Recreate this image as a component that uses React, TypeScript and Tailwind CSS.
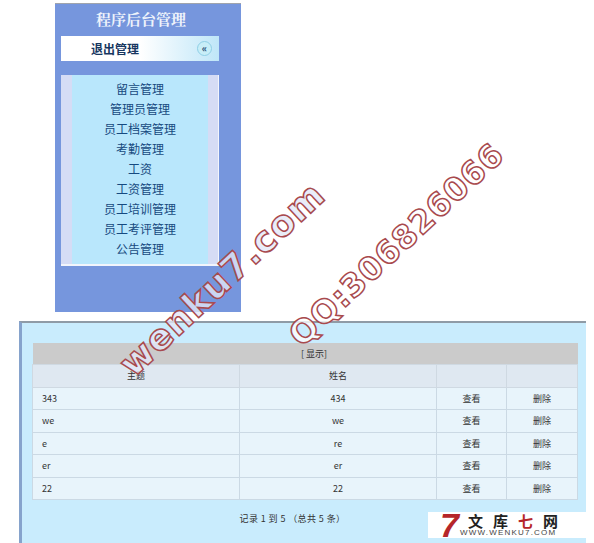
import React from "react";

const menu = ["留言管理","管理员管理","员工档案管理","考勤管理","工资","工资管理","员工培训管理","员工考评管理","公告管理"];
const rows = [["343","434"],["we","we"],["e","re"],["er","er"],["22","22"]];

export default function App() {
  return (
    <div className="relative w-[594px] h-[543px] overflow-hidden bg-white font-['Noto_Sans_CJK_SC',sans-serif]">
      <aside className="ml-[55px] mt-[3px] w-[186px] h-[309px] bg-[#7696dd] border-t-[1px] border-[#a0a4ac] flex flex-col px-[6px]">
        <h1 className="mt-[5px] pr-[14px] text-center text-[15px] leading-[20px] font-bold text-[#eef3fb] font-['Noto_Serif_CJK_SC','Noto_Sans_CJK_SC',serif]">程序后台管理</h1>
        <div className="mt-[7px] h-[25px] w-[158px] flex items-center justify-between bg-gradient-to-r from-white from-50% to-[#bfe6f8] pl-[30px] pr-[7px]">
          <span className="text-[12px] font-bold text-[#17365f]">退出管理</span>
          <span className="w-[15px] h-[15px] rounded-full bg-[#c8eef8] border border-[#8fcfe6] text-[#1c4a70] text-[10px] leading-[11px] text-center font-bold">«</span>
        </div>
        <nav className="mt-[14px] h-[191px] w-[158px] bg-[#d5dcf5] border-b-2 border-r border-[#f2f5fc] px-[11px]">
          <ul className="h-full w-[136px] bg-[#b9e7fc] pt-[4px]">
            {menu.map((m) => (
              <li key={m} className="h-[20px] leading-[20px] text-center text-[12px] text-[#174a80]">{m}</li>
            ))}
          </ul>
        </nav>
      </aside>

      <main className="ml-[19px] mt-[9px] w-[567px] h-[222px] bg-[#c9ecfd] border-t-2 border-l-[3px] border-t-[#8f9ba6] border-l-[#86a3cc] pl-[10px] pr-[9px] pt-[20px]">
        <table className="w-[545px] table-fixed border-collapse text-[9px] text-[#333]">
          <colgroup>
            <col className="w-[207px]" />
            <col className="w-[197px]" />
            <col className="w-[70px]" />
            <col className="w-[71px]" />
          </colgroup>
          <thead>
            <tr className="h-[21px] bg-[#cbcbcb]">
              <th colSpan={4} className="font-normal text-center text-[#333] pl-[18px]">[ 显示]</th>
            </tr>
            <tr className="h-[23px] bg-[#dfe8f1]">
              <th className="font-normal border border-[#cfd9e2]">主题</th>
              <th className="font-normal border border-[#cfd9e2]">姓名</th>
              <th className="border border-[#cfd9e2]"></th>
              <th className="border border-[#cfd9e2]"></th>
            </tr>
          </thead>
          <tbody>
            {rows.map((r, i) => (
              <tr key={i} className="h-[22.5px] bg-[#e8f4fb]">
                <td className="border border-[#cbd9e4] pl-[9px]">{r[0]}</td>
                <td className="border border-[#cbd9e4] text-center">{r[1]}</td>
                <td className="border border-[#cbd9e4] text-center">查看</td>
                <td className="border border-[#cbd9e4] text-center">删除</td>
              </tr>
            ))}
          </tbody>
        </table>
        <p className="mt-[13px] pr-[24px] text-center text-[9px] leading-[12px] tracking-[0.4px] text-[#333]">记录 1 到 5 （总共 5 条）</p>
      </main>

      {/* logo */}
      <div className="absolute left-[428px] top-[512px] w-[158px] h-[26px] bg-white flex items-center pl-[12px] overflow-hidden">
        <span className="italic font-bold text-[34px] leading-[26px] text-[#b5262a] font-['Liberation_Sans',sans-serif] w-[24px]">7</span>
        <div className="flex flex-col">
          <div className="flex justify-between w-[90px] ml-[4px] text-[15px] leading-[15px] font-bold text-[#222]">
            <span>文</span><span>库</span><span className="text-[#b5262a]">七</span><span>网</span>
          </div>
          <span className="text-[8px] leading-[9px] tracking-[1.2px] text-[#444] -ml-[4px] font-['Liberation_Sans',sans-serif]">WWW.WENKU7.COM</span>
        </div>
      </div>

      {/* watermark */}
      <div className="absolute left-[93px] top-[268px] w-[240px] text-center origin-center -rotate-[43deg] text-[36px] leading-[40px] font-bold tracking-[1px] whitespace-nowrap text-[#e4e8f8cc] [-webkit-text-stroke:1.5px_#a84a4e] font-['DejaVu_Sans',sans-serif]">wenku7.com</div>
      <div className="absolute left-[262px] top-[238px] w-[240px] text-center origin-center -rotate-[43deg] text-[32px] leading-[40px] font-bold tracking-[1px] whitespace-nowrap text-[#ffffffcc] [-webkit-text-stroke:1.5px_#a84a4e] font-['DejaVu_Sans',sans-serif]">QQ:306826066</div>
    </div>
  );
}
